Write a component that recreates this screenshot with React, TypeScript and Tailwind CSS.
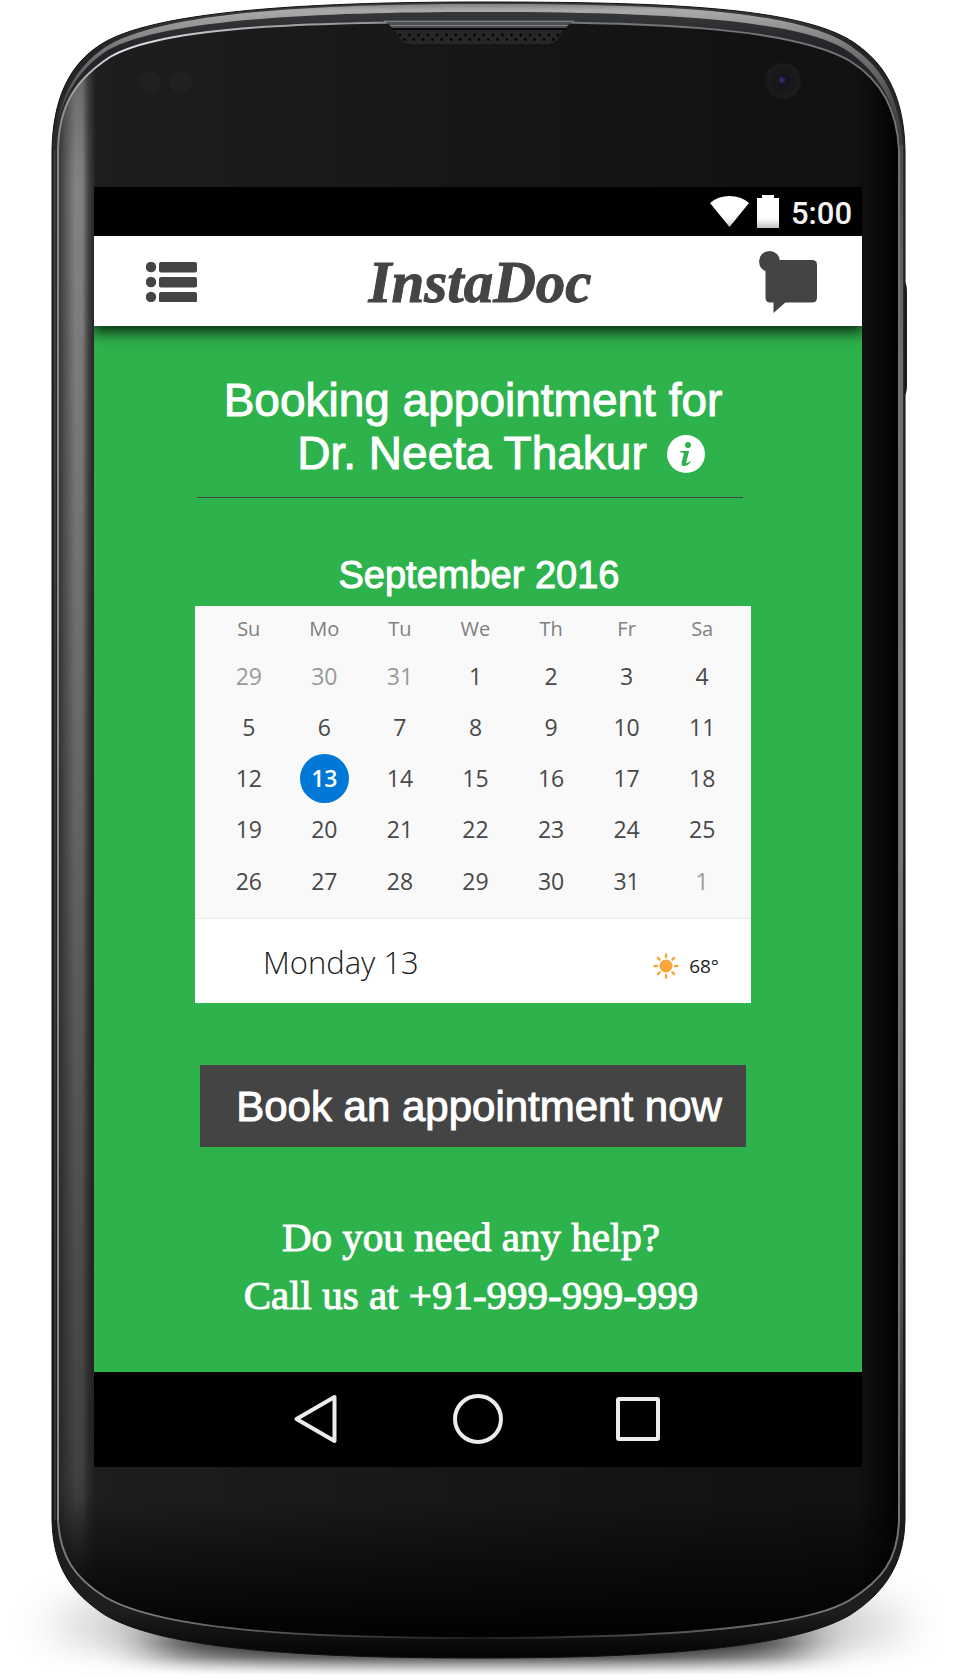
import { useState } from "react";

const WEEKDAYS = [
  { short: "Su", long: "Sunday" },
  { short: "Mo", long: "Monday" },
  { short: "Tu", long: "Tuesday" },
  { short: "We", long: "Wednesday" },
  { short: "Th", long: "Thursday" },
  { short: "Fr", long: "Friday" },
  { short: "Sa", long: "Saturday" },
];

const WEEKS = [
  [29, 30, 31, 1, 2, 3, 4],
  [5, 6, 7, 8, 9, 10, 11],
  [12, 13, 14, 15, 16, 17, 18],
  [19, 20, 21, 22, 23, 24, 25],
  [26, 27, 28, 29, 30, 31, 1],
];

const OUTER =
  "M52 150 C53 98 70 64 100 45 C150 12 300 2 479 2 C660 2 810 6 860 47 C888 68 904 100 905 150 V1520 C904 1565 884 1593 850 1615 C790 1650 640 1658 479 1658 C310 1658 165 1650 105 1615 C72 1593 53 1568 52 1520 Z";
const GLASS =
  "M58 150 C59 105 75 80 110 57 C165 25 320 22 479 22 C640 22 790 26 850 61 C882 81 897 110 899 150 V1520 C898 1560 882 1580 850 1600 C800 1630 640 1638 479 1638 C320 1638 165 1632 105 1597 C75 1578 60 1557 59 1520 Z";

function DeviceBody() {
  const holes = Array.from({ length: 18 }, (_, i) => i);
  return (
    <svg
      aria-hidden="true"
      viewBox="0 0 958 1678"
      preserveAspectRatio="none"
      className="absolute inset-0 h-full w-full"
    >
      <defs>
        <linearGradient id="rim" x1="0" y1="0" x2="0" y2="1678" gradientUnits="userSpaceOnUse">
          <stop offset="0" stopColor="#3b3c3e" />
          <stop offset="0.03" stopColor="#232427" />
          <stop offset="0.1" stopColor="#2c2d2e" />
          <stop offset="0.9" stopColor="#1b1b1c" />
          <stop offset="0.96" stopColor="#1c1e1f" />
          <stop offset="0.985" stopColor="#060606" />
        </linearGradient>
        <linearGradient id="chrome" x1="0" y1="3" x2="0" y2="150" gradientUnits="userSpaceOnUse">
          <stop offset="0" stopColor="#7c7c7c" />
          <stop offset="0.05" stopColor="#a9aaa9" />
          <stop offset="0.3" stopColor="#777" />
          <stop offset="0.7" stopColor="#4a4a4a" />
          <stop offset="1" stopColor="#3a3a3a" />
        </linearGradient>
        <linearGradient id="face" x1="58" y1="22" x2="899" y2="22" gradientUnits="userSpaceOnUse">
          <stop offset="0" stopColor="#1e1e1e" />
          <stop offset="0.6" stopColor="#151515" />
          <stop offset="0.95" stopColor="#111" />
          <stop offset="1" stopColor="#020202" />
        </linearGradient>
        <linearGradient id="faceFade" x1="0" y1="1500" x2="0" y2="1630" gradientUnits="userSpaceOnUse">
          <stop offset="0" stopColor="#000" stopOpacity="0" />
          <stop offset="1" stopColor="#000" stopOpacity="0.9" />
        </linearGradient>
        <linearGradient id="gleam" x1="58" y1="0" x2="96" y2="0" gradientUnits="userSpaceOnUse">
          <stop offset="0" stopColor="#8c8c8c" stopOpacity="0.2" />
          <stop offset="0.2" stopColor="#8c8c8c" stopOpacity="0.55" />
          <stop offset="0.45" stopColor="#8e8e8e" stopOpacity="0.9" />
          <stop offset="0.64" stopColor="#8c8c8c" stopOpacity="0.9" />
          <stop offset="0.8" stopColor="#8c8c8c" stopOpacity="0.35" />
          <stop offset="1" stopColor="#8c8c8c" stopOpacity="0" />
        </linearGradient>
        <linearGradient id="gleamFade" x1="0" y1="60" x2="0" y2="1600" gradientUnits="userSpaceOnUse">
          <stop offset="0" stopColor="#bbb" />
          <stop offset="0.08" stopColor="#fff" />
          <stop offset="0.35" stopColor="#d0d0d0" />
          <stop offset="0.65" stopColor="#909090" />
          <stop offset="0.92" stopColor="#585858" />
          <stop offset="1" stopColor="#000" />
        </linearGradient>
        <mask id="gleamMask" maskUnits="userSpaceOnUse" x="0" y="0" width="958" height="1678">
          <rect width="958" height="1678" fill="url(#gleamFade)" />
        </mask>
        <linearGradient id="edge" x1="58" y1="0" x2="900" y2="0" gradientUnits="userSpaceOnUse">
          <stop offset="0" stopColor="#85888b" />
          <stop offset="0.07" stopColor="#e4e5e8" />
          <stop offset="0.25" stopColor="#a4a6ac" />
          <stop offset="0.6" stopColor="#74777b" />
          <stop offset="1" stopColor="#707275" />
        </linearGradient>
        <linearGradient id="edgeLow" x1="58" y1="0" x2="900" y2="0" gradientUnits="userSpaceOnUse">
          <stop offset="0" stopColor="#77797b" />
          <stop offset="0.1" stopColor="#7a7c7e" />
          <stop offset="0.5" stopColor="#1c1c1c" />
          <stop offset="0.9" stopColor="#7a7c7e" />
          <stop offset="1" stopColor="#707275" />
        </linearGradient>
        <linearGradient id="sideRail" x1="0" y1="145" x2="0" y2="1525" gradientUnits="userSpaceOnUse">
          <stop offset="0" stopColor="#4a4b4d" />
          <stop offset="0.15" stopColor="#6c6c6f" />
          <stop offset="0.5" stopColor="#77777a" />
          <stop offset="0.85" stopColor="#4a4a4c" />
          <stop offset="1" stopColor="#1b1b1c" />
        </linearGradient>
        <linearGradient id="groundFade" x1="0" y1="1645" x2="0" y2="1677" gradientUnits="userSpaceOnUse">
          <stop offset="0" stopColor="#fff" />
          <stop offset="0.4" stopColor="#ccc" />
          <stop offset="0.95" stopColor="#000" />
        </linearGradient>
        <mask id="groundMask" maskUnits="userSpaceOnUse" x="0" y="1400" width="958" height="278">
          <rect y="1400" width="958" height="278" fill="url(#groundFade)" />
        </mask>
        <filter id="soft" x="-20%" y="-100%" width="140%" height="300%">
          <feGaussianBlur stdDeviation="26 20" />
        </filter>
        <clipPath id="glassClip">
          <path d={GLASS} />
        </clipPath>
      </defs>

      <g mask="url(#groundMask)">
        <ellipse cx="479" cy="1625" rx="425" ry="50" fill="#000" opacity="0.2" filter="url(#soft)" />
        <ellipse cx="479" cy="1642" rx="335" ry="40" fill="#000" opacity="0.85" filter="url(#soft)" />
      </g>

      <path d="M904 280 q3 4 3 12 V385 q0 8 -3 12 Z" fill="#1c1d1d" />
      <path d={OUTER} fill="url(#rim)" stroke="#111" strokeWidth="1" />
      <path
        d="M56 135 C60 95 76 68 104 48 C155 14 300 4 479 4 C660 4 806 9 856 50 C884 70 900 100 903 150 H901 C897 104 880 76 852 54 C806 18 650 12 479 12 C310 12 162 20 108 50 C80 68 61 97 56 135 Z"
        fill="url(#chrome)"
      />
      <path d="M55 150 V1520" stroke="#484a48" strokeWidth="1" />
      <rect x="900" y="145" width="3" height="1380" fill="url(#sideRail)" />

      <path d={GLASS} fill="url(#face)" />
      <g clipPath="url(#glassClip)">
        <rect x="58" y="60" width="38" height="1540" fill="url(#gleam)" mask="url(#gleamMask)" />
        <rect x="58" y="1490" width="842" height="150" fill="url(#faceFade)" />
      </g>
      <path
        d="M58 1520 V150 C59 105 75 80 110 57 C165 25 320 22 479 22 C640 22 790 26 850 61 C882 81 897 110 899 150 V1520"
        fill="none"
        stroke="url(#edge)"
        strokeWidth="2"
      />
      <path
        d="M899 1520 C898 1560 882 1580 850 1600 C800 1630 640 1638 479 1638 C320 1638 165 1632 105 1597 C75 1578 60 1557 58 1520"
        fill="none"
        stroke="url(#edgeLow)"
        strokeWidth="2"
      />

      <path d="M382 21 Q388 22 394 28 L398 36 Q402 44 410 44 H548 Q556 44 560 36 L564 28 Q570 22 576 21 Z" fill="#262626" />
      <path d="M382 20 Q388 22 392 28 H566 Q570 22 576 20 Z" fill="#4c4e52" />
      <path d="M384 21.500 H574 M390 25.500 H568" stroke="#7d8085" strokeWidth="1" />
      <path d="M392 29 H566" stroke="#080808" strokeWidth="2" />
      {holes.map((i) => (
        <g key={i} fill="#060606">
          <circle cx={400 + i * 9.3} cy="35" r="1.400" />
          {i < 17 && <circle cx={404.500 + i * 9.3} cy="39.500" r="1.400" />}
        </g>
      ))}

      <circle cx="150" cy="82" r="11" fill="#212121" />
      <circle cx="181" cy="82" r="11" fill="#212121" />
      <circle cx="783" cy="81" r="18" fill="#1b1b1b" />
      <circle cx="783" cy="81" r="13" fill="#181818" />
      <circle cx="784" cy="81" r="7" fill="#15151f" />
      <circle cx="782" cy="80" r="3" fill="#2b2860" />
    </svg>
  );
}

function StatusBar() {
  return (
    <div className="flex h-[49px] items-center justify-end bg-black pr-[10px] font-['Roboto',sans-serif]">
      <svg aria-label="Wi-Fi" role="img" width="39" height="31" viewBox="0 0 39 31">
        <defs>
          <linearGradient id="glyph" x1="0" y1="0" x2="0" y2="1">
            <stop offset="0.7" stopColor="#fff" />
            <stop offset="1" stopColor="#ccc" />
          </linearGradient>
        </defs>
        <path d="M0 7 Q8 0 19.500 0 T39 7 L19.500 31 Z" fill="url(#glyph)" />
      </svg>
      <svg aria-label="Battery" role="img" width="22" height="33" viewBox="0 0 22 33" className="ml-2">
        <path d="M5 0 H17 V3 H22 V33 H0 V3 H5 Z" fill="url(#glyph)" />
      </svg>
      <span className="ml-3 pt-1 text-[31px] leading-[36px] font-medium text-[#f4f4f4]">5:00</span>
    </div>
  );
}

function AppHeader() {
  return (
    <header className="relative flex h-[90px] items-center bg-white pt-[2px] pr-[45px] pl-[52px] shadow-[0_4px_14px_2px_rgba(0,0,0,0.8)]">
      <button type="button" aria-label="Menu" className="text-[#444]">
        <svg width="51" height="40" viewBox="0 0 51 40" fill="currentColor">
          {[0, 15, 30].map((y) => (
            <g key={y}>
              <circle cx="5" cy={y + 5} r="5.200" />
              <rect x="13" y={y} width="38" height="10.400" rx="2" />
            </g>
          ))}
        </svg>
      </button>
      <h1 className="flex-1 pl-1 text-center font-['Liberation_Serif',serif] text-[59px] leading-[64px] font-bold text-[#444] italic [-webkit-text-stroke:1px_#444]">
        InstaDoc
      </h1>
      <button type="button" aria-label="Messages" className="text-[#444]">
        <svg width="58" height="62" viewBox="0 0 58 62" fill="currentColor">
          <circle cx="10.500" cy="10.500" r="10.500" />
          <rect x="6.500" y="9" width="51.500" height="42.500" rx="4.500" />
          <path d="M14.500 50 V62 L28 50 Z" />
        </svg>
      </button>
    </header>
  );
}

function Calendar() {
  const [selected, setSelected] = useState({ week: 2, day: 1 });
  const label = `${WEEKDAYS[selected.day].long} ${WEEKS[selected.week][selected.day]}`;

  return (
    <div className="bg-[#f9f9f9] font-['Open_Sans','Noto_Sans',sans-serif]">
      <div className="pr-[11px] pb-[10px] pl-4">
        <table aria-label="September 2016" className="w-full table-fixed border-collapse text-center">
          <thead>
            <tr className="h-[45px] text-[20px] leading-[28px] text-[#808080]">
              {WEEKDAYS.map((d) => (
                <th key={d.short} scope="col" className="p-0 font-normal">
                  {d.short}
                </th>
              ))}
            </tr>
          </thead>
          <tbody>
            {WEEKS.map((week, w) => (
              <tr key={w} className={w < 3 ? "h-[51px]" : "h-[52px]"}>
                {week.map((n, d) => {
                  const outside = (w === 0 && n > 7) || (w === 4 && n < 7);
                  const active = selected.week === w && selected.day === d;
                  return (
                    <td key={d} className="p-0">
                      <button
                        type="button"
                        aria-pressed={active}
                        onClick={() => setSelected({ week: w, day: d })}
                        className={`mx-auto flex size-[49px] items-center justify-center rounded-full pb-[2px] text-[23px] leading-[30px] ${
                          active ? "bg-[#0078d7] font-semibold text-white" : outside ? "text-[#999]" : "text-[#484848]"
                        }`}
                      >
                        {n}
                      </button>
                    </td>
                  );
                })}
              </tr>
            ))}
          </tbody>
        </table>
      </div>
      <div className="flex h-[85px] items-center border-t border-[#ececec] bg-white pr-8 pl-[68px] text-[#222]">
        <p className="flex-1 pt-[2px] text-[31px] leading-[40px] font-light">{label}</p>
        <svg aria-label="Sunny" role="img" width="26" height="26" viewBox="0 0 26 26" className="mt-[10px]">
          <circle cx="13" cy="13" r="6.500" fill="#f5a73b" />
          {[0, 45, 90, 135, 180, 225, 270, 315].map((a) => (
            <path
              key={a}
              d="M13 1.500 V4"
              stroke="#f5a73b"
              strokeWidth="2.400"
              strokeLinecap="round"
              transform={`rotate(${a} 13 13)`}
            />
          ))}
        </svg>
        <span className="mt-[10px] ml-[10px] text-[19px] leading-[28px] font-medium text-[#222]">68°</span>
      </div>
    </div>
  );
}

function Booking() {
  return (
    <main className="bg-[#2eb24c] pt-12 pr-[111px] pb-12 pl-[101px] font-['Liberation_Sans',Arial,sans-serif] text-white">
      <h2 className="text-center text-[46px] leading-[53px] whitespace-nowrap [-webkit-text-stroke:1px_#fff]">
        Booking appointment for
        <span className="flex items-center justify-center gap-5 pl-14">
          Dr. Neeta Thakur
          <button type="button" aria-label="About the doctor">
            <svg width="38" height="38" viewBox="0 0 38 38">
              <circle cx="19" cy="19" r="19" fill="#fff" />
              <circle cx="21" cy="10" r="3" fill="#2eb24c" />
              <path
                d="M13.500 16 H22.200 L19.300 27 Q19.100 28.300 20.300 28 Q21.800 27.500 23 26 L23.800 26.800 Q21 31 17 31 Q13.800 31 14.700 27.200 L16.800 19 Q17 17.700 15.500 17.600 L13.200 17.500 Z"
                fill="#2eb24c"
              />
            </svg>
          </button>
        </span>
      </h2>
      <hr className="mt-[17px] mr-2 ml-[2px] border-[#444]" />
      <h3 className="mt-[55px] mb-[9px] pl-3 text-center text-[38px] leading-[44px] [-webkit-text-stroke:1px_#fff]">
        September 2016
      </h3>
      <Calendar />
      <div className="mt-[62px] px-[5px]">
        <button
          type="button"
          className="h-[82px] w-full bg-[#444] pt-[2px] pl-3 text-[42px] leading-[48px] whitespace-nowrap [-webkit-text-stroke:1px_#fff]"
        >
          Book an appointment now
        </button>
      </div>
      <p className="mt-[61px] pr-1 text-center font-['Liberation_Serif',serif] text-[41px] leading-[58px] whitespace-nowrap [-webkit-text-stroke:1px_#fff]">
        Do you need any help?
        <br />
        Call us at <a href="tel:+91999999999">+91-999-999-999</a>
      </p>
    </main>
  );
}

function NavBar() {
  return (
    <nav className="flex h-[95px] items-center justify-center gap-[110px] bg-black pb-[2px]">
      <button type="button" aria-label="Back">
        <svg width="50" height="50" viewBox="0 0 50 50" fill="none" stroke="#ececec" strokeWidth="4" strokeLinejoin="round">
          <path d="M3.500 25 L41.500 3 V47 Z" />
        </svg>
      </button>
      <button type="button" aria-label="Home">
        <svg width="50" height="50" viewBox="0 0 50 50" fill="none" stroke="#ececec" strokeWidth="4">
          <circle cx="25" cy="25" r="23" />
        </svg>
      </button>
      <button type="button" aria-label="Recent apps">
        <svg width="50" height="50" viewBox="0 0 50 50" fill="none" stroke="#ececec" strokeWidth="4" strokeLinejoin="round">
          <rect x="5" y="5" width="40" height="40" rx="1" />
        </svg>
      </button>
    </nav>
  );
}

export default function App() {
  return (
    <div className="bg-white">
      <div className="relative mx-auto w-full max-w-[958px] pt-[187px] pr-[96px] pb-[211px] pl-[94px]">
        <DeviceBody />
        <div className="relative overflow-hidden">
          <StatusBar />
          <AppHeader />
          <Booking />
          <NavBar />
        </div>
      </div>
    </div>
  );
}
